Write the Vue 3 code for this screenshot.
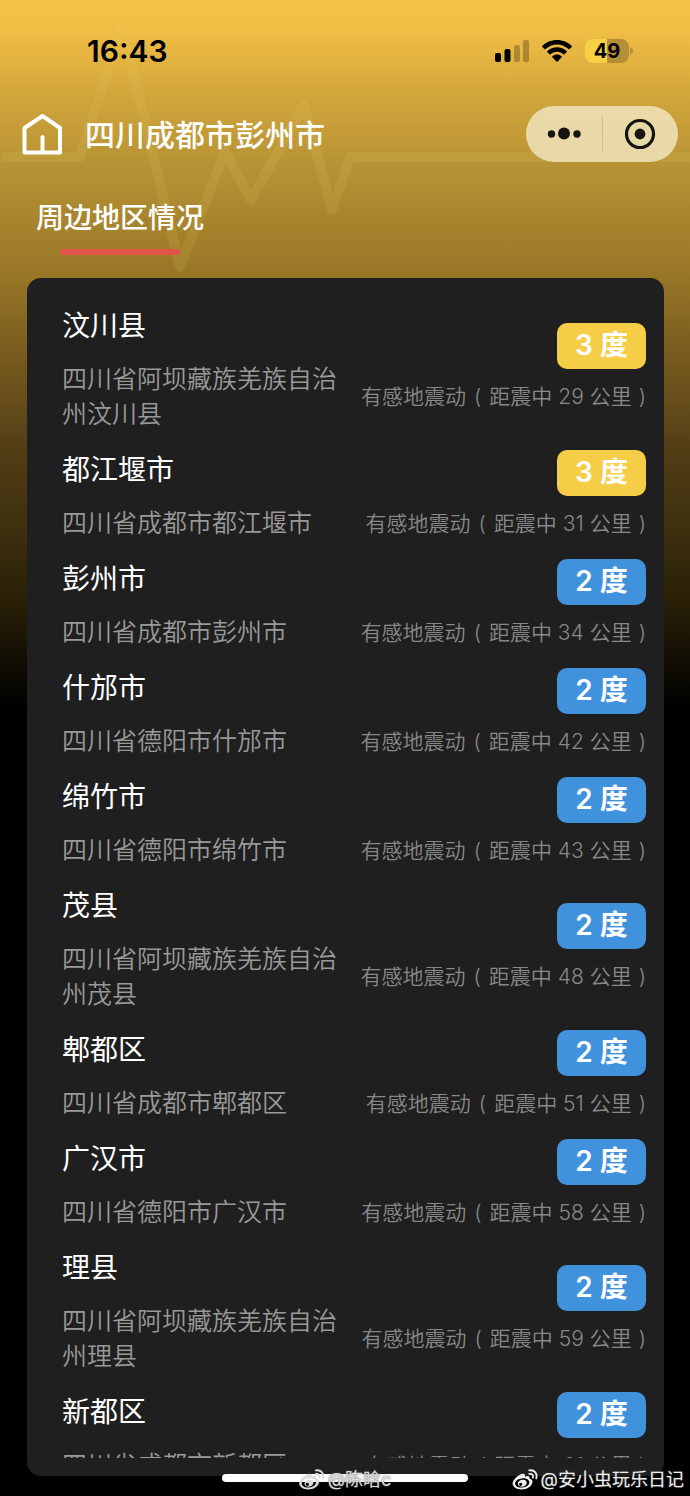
<script setup>
const regions = [
  { name: '汶川县', address: '四川省阿坝藏族羌族自治州汶川县', level: 3, distance: 29 },
  { name: '都江堰市', address: '四川省成都市都江堰市', level: 3, distance: 31 },
  { name: '彭州市', address: '四川省成都市彭州市', level: 2, distance: 34 },
  { name: '什邡市', address: '四川省德阳市什邡市', level: 2, distance: 42 },
  { name: '绵竹市', address: '四川省德阳市绵竹市', level: 2, distance: 43 },
  { name: '茂县', address: '四川省阿坝藏族羌族自治州茂县', level: 2, distance: 48 },
  { name: '郫都区', address: '四川省成都市郫都区', level: 2, distance: 51 },
  { name: '广汉市', address: '四川省德阳市广汉市', level: 2, distance: 58 },
  { name: '理县', address: '四川省阿坝藏族羌族自治州理县', level: 2, distance: 59 },
  { name: '新都区', address: '四川省成都市新都区', level: 2, distance: 61 },
]
const marks = [
  { text: '@陈晗c', kind: 'mark-center' },
  { text: '@安小虫玩乐日记', kind: 'mark-right' },
]
</script>

<template>
  <div class="page">
    <svg class="pulse" viewBox="0 0 690 280" fill="none" aria-hidden="true">
      <path d="M2 157H80L122 25L180 267L225 152L251 200L304 105L332 210L350 157H690" />
    </svg>

    <div class="status">
      <span class="time">16:43</span>
      <div class="status-icons">
        <svg width="34" height="22" viewBox="0 0 34 22" aria-hidden="true">
          <rect x="0" y="13" width="6" height="9" rx="2" />
          <rect x="9.500" y="9" width="6" height="13" rx="2" />
          <rect x="19" y="5" width="6" height="17" rx="2" opacity=".25" />
          <rect x="28" y="0" width="6" height="22" rx="2" opacity=".25" />
        </svg>
        <svg width="30" height="22" viewBox="0 0 30 22" aria-hidden="true">
          <path d="M15 0C20.800 0 26 2.300 29.700 5.900Q30.200 6.400 29.700 6.900L27.600 9Q27.100 9.500 26.500 9C23.400 6.100 19.400 4.400 15 4.400S6.600 6.100 3.500 9Q2.900 9.500 2.400 9L.3 6.900Q-.2 6.400 .3 5.900C4 2.300 9.200 0 15 0Z" />
          <path d="M15 7.300C18.800 7.300 22.200 8.800 24.700 11.100Q25.200 11.600 24.700 12.100L22.500 14.300Q22 14.700 21.400 14.200C19.700 12.700 17.500 11.700 15 11.700S10.300 12.700 8.600 14.200Q8 14.700 7.500 14.300L5.300 12.100Q4.800 11.600 5.300 11.100C7.800 8.800 11.200 7.300 15 7.300Z" />
          <path d="M15 14.600C16.700 14.600 18.300 15.200 19.600 16.300Q20.100 16.800 19.600 17.300L15.600 21.400Q15 22 14.400 21.400L10.400 17.300Q9.900 16.800 10.400 16.300C11.700 15.200 13.300 14.600 15 14.600Z" />
        </svg>
        <div class="battery">
          <span class="charge">49</span>
          <svg class="tip" width="3" height="8" viewBox="0 0 3 8" aria-hidden="true"><path d="M0 0Q3 1.500 3 4T0 8Z" /></svg>
        </div>
      </div>
    </div>

    <header class="nav">
      <button class="home" type="button" aria-label="首页">
        <svg width="42" height="42" viewBox="0 0 42 42" fill="none" aria-hidden="true">
          <path d="M2.500 39.500V15L20.500 3L38 15V39.500Z" stroke-width="4" stroke-linejoin="round" />
          <path d="M20.500 24V39" stroke-width="4" stroke-linecap="round" />
        </svg>
      </button>
      <h1>四川成都市彭州市</h1>
      <div class="capsule">
        <button type="button" aria-label="更多">
          <svg width="34" height="14" viewBox="0 0 34 14" aria-hidden="true">
            <circle cx="4.500" cy="7" r="3.700" /><circle cx="17" cy="6.500" r="6" /><circle cx="30" cy="7" r="3.700" />
          </svg>
        </button>
        <span class="divider"></span>
        <button type="button" aria-label="关闭">
          <svg width="32" height="32" viewBox="0 0 32 32" aria-hidden="true">
            <circle cx="16" cy="16" r="13.500" fill="none" stroke="#17150f" stroke-width="3.200" />
            <circle cx="16" cy="16" r="5.400" />
          </svg>
        </button>
      </div>
    </header>

    <h2 class="section"><span>周边地区情况</span></h2>

    <main class="card">
      <ul class="list">
        <li v-for="r in regions" :key="r.name" class="row">
          <div class="place">
            <h3>{{ r.name }}</h3>
            <p>{{ r.address }}</p>
          </div>
          <div class="effect">
            <span class="badge" :class="'level-' + r.level">{{ r.level }} 度</span>
            <p>有感地震动<span class="open">(</span>距震中 {{ r.distance }} 公里<span class="close">)</span></p>
          </div>
        </li>
      </ul>
    </main>

    <div class="home-bar"></div>
    <div v-for="m in marks" :key="m.text" class="mark" :class="m.kind">
      <svg width="26" height="22" viewBox="0 0 26 22" aria-hidden="true">
        <path fill-rule="evenodd" d="M9.500 5C12 4 13.500 5.200 12.900 7.600C15.500 6.500 18.200 6.700 17.500 9.600C20 10.300 21 11.700 20.300 14C19.200 17.600 14.800 20.500 9.600 20.500C4.400 20.500 .6 17.900 .6 14.600C.6 11 5.300 6.500 9.500 5ZM10.300 9.400C6 9.700 2.900 12 3.100 14.700C3.300 17.300 6.400 18.900 10.400 18.500C14.400 18.200 17.500 15.900 17.300 13.300C17.100 10.800 14.200 9.100 10.300 9.400Z" />
        <path fill-rule="evenodd" d="M10.500 10.700C13.400 10.400 15.200 12 14.700 14.200C14.200 16.500 11.800 17.900 9.300 17.700C6.800 17.500 5.300 15.700 6 13.700C6.600 12 8.300 10.900 10.500 10.700ZM8.600 13.700A1.600 1.600 0 1 0 8.700 16.900A1.600 1.600 0 1 0 8.600 13.700Z" />
        <path d="M17.300 4.900C19.900 4.500 21.600 6.200 20.900 8.700M17.200 1.400C22.200 .4 25.700 4.500 24.200 9.500" fill="none" stroke="currentColor" stroke-width="1.800" stroke-linecap="round" />
      </svg>
      <span>{{ m.text }}</span>
    </div>
  </div>
</template>

<style>
body {
  margin: 0;
  background: #000;
}
</style>

<style scoped>
.page {
  position: relative;
  box-sizing: border-box;
  height: 100vh;
  padding-bottom: 20px;
  display: flex;
  flex-direction: column;
  overflow: hidden;
  color: #fff;
  font-family: Inter, "Noto Sans CJK SC", sans-serif;
  background: linear-gradient(#f4c247 0, #f0be45 30px, #d0a43a 100px, #ba9536 157px, #987626 275px, #7a5d1f 350px, #523e15 450px, #382b0c 550px, #292006 600px, #120e04 660px, #000 710px);
}
h1, h2, h3, p, ul {
  margin: 0;
  padding: 0;
}
button {
  padding: 0;
  border: 0;
  background: none;
  display: flex;
  align-items: center;
  justify-content: center;
}
.pulse {
  position: absolute;
  top: 0;
  left: 0;
  width: 100%;
}
.pulse path {
  stroke: rgba(232, 212, 110, 0.13);
  stroke-width: 10;
  stroke-linejoin: round;
}
.status, .nav, .section, .card {
  position: relative;
}
.status {
  height: 102px;
  margin-bottom: 2px;
  box-sizing: border-box;
  padding: 0 57px 0 87px;
  display: flex;
  align-items: center;
  justify-content: space-between;
  color: #000;
}
.time {
  font-size: 30px;
  font-weight: 600;
}
.status-icons {
  display: flex;
  align-items: center;
  gap: 13px;
}
.battery {
  display: flex;
  align-items: center;
  gap: 1px;
}
.charge {
  width: 44px;
  height: 24px;
  border-radius: 8px;
  background: linear-gradient(90deg, #f8d044 49%, #b48f37 49%);
  font-size: 20px;
  font-weight: 700;
  line-height: 24px;
  text-align: center;
}
.tip {
  fill: #b48f37;
}
.nav {
  height: 60px;
  padding: 0 12px 0 22px;
  display: flex;
  align-items: center;
}
.home {
  margin-right: 21px;
}
.home path {
  stroke: #fff;
}
h1 {
  flex: 1;
  padding-top: 2px;
  font-size: 30px;
  font-weight: 500;
  line-height: 40px;
}
.capsule {
  width: 152px;
  height: 56px;
  border-radius: 28px;
  background: rgba(242, 232, 196, 0.8);
  display: flex;
  align-items: center;
}
.capsule button {
  flex: 1;
  height: 56px;
}
.capsule svg {
  fill: #17150f;
}
.divider {
  width: 1px;
  height: 36px;
  background: #d2c193;
}
.section {
  height: 91px;
  margin: 0 36px 23px;
  display: flex;
  align-items: flex-end;
  font-size: 28px;
  font-weight: 500;
  line-height: 40px;
}
.section span {
  padding-bottom: 17px;
}
.section::after {
  content: "";
  position: absolute;
  left: 24px;
  bottom: 0;
  width: 120px;
  height: 6px;
  border-radius: 2px;
  background: #df5549;
}
.card {
  flex: 1;
  min-height: 0;
  margin: 0 26px 0 27px;
  padding: 27px 18px 18px 35px;
  box-sizing: border-box;
  display: flex;
  border-radius: 14px;
  background: #1f1f1f;
}
.list {
  flex: 1;
  list-style: none;
  overflow: hidden;
}
.row {
  display: flex;
  align-items: center;
  justify-content: space-between;
  margin-bottom: 17px;
}
.place {
  width: 276px;
}
h3 {
  margin-bottom: 15px;
  font-size: 28px;
  font-weight: 400;
  line-height: 42px;
}
.place p {
  color: #999;
  font-size: 25px;
  font-weight: 350;
  line-height: 35px;
}
.effect {
  padding-bottom: 1px;
  display: flex;
  flex-direction: column;
  align-items: flex-end;
  gap: 12px;
}
.badge {
  width: 89px;
  height: 46px;
  border-radius: 10px;
  font-size: 28px;
  font-weight: 600;
  line-height: 44px;
  text-align: center;
}
.level-3 {
  background: #f6cd46;
}
.level-2 {
  background: #4192dc;
}
.effect p {
  color: #888;
  font-size: 21px;
  font-weight: 350;
  line-height: 32px;
  white-space: nowrap;
}
.open {
  margin: 0 8px;
}
.close {
  margin-left: 7px;
}
.home-bar {
  position: absolute;
  left: 50%;
  bottom: 14px;
  width: 246px;
  height: 8px;
  margin-left: -123px;
  border-radius: 4px;
  background: #fff;
}
.mark {
  position: absolute;
  bottom: 4px;
  display: flex;
  align-items: center;
  gap: 3px;
  color: #ddd;
  font-size: 18px;
  line-height: 24px;
  text-shadow: 0 0 2px #555;
}
.mark svg {
  fill: currentColor;
}
.mark-center {
  left: 50%;
  transform: translateX(-50%);
}
.mark-right {
  right: 6px;
  color: #eee;
}
</style>
